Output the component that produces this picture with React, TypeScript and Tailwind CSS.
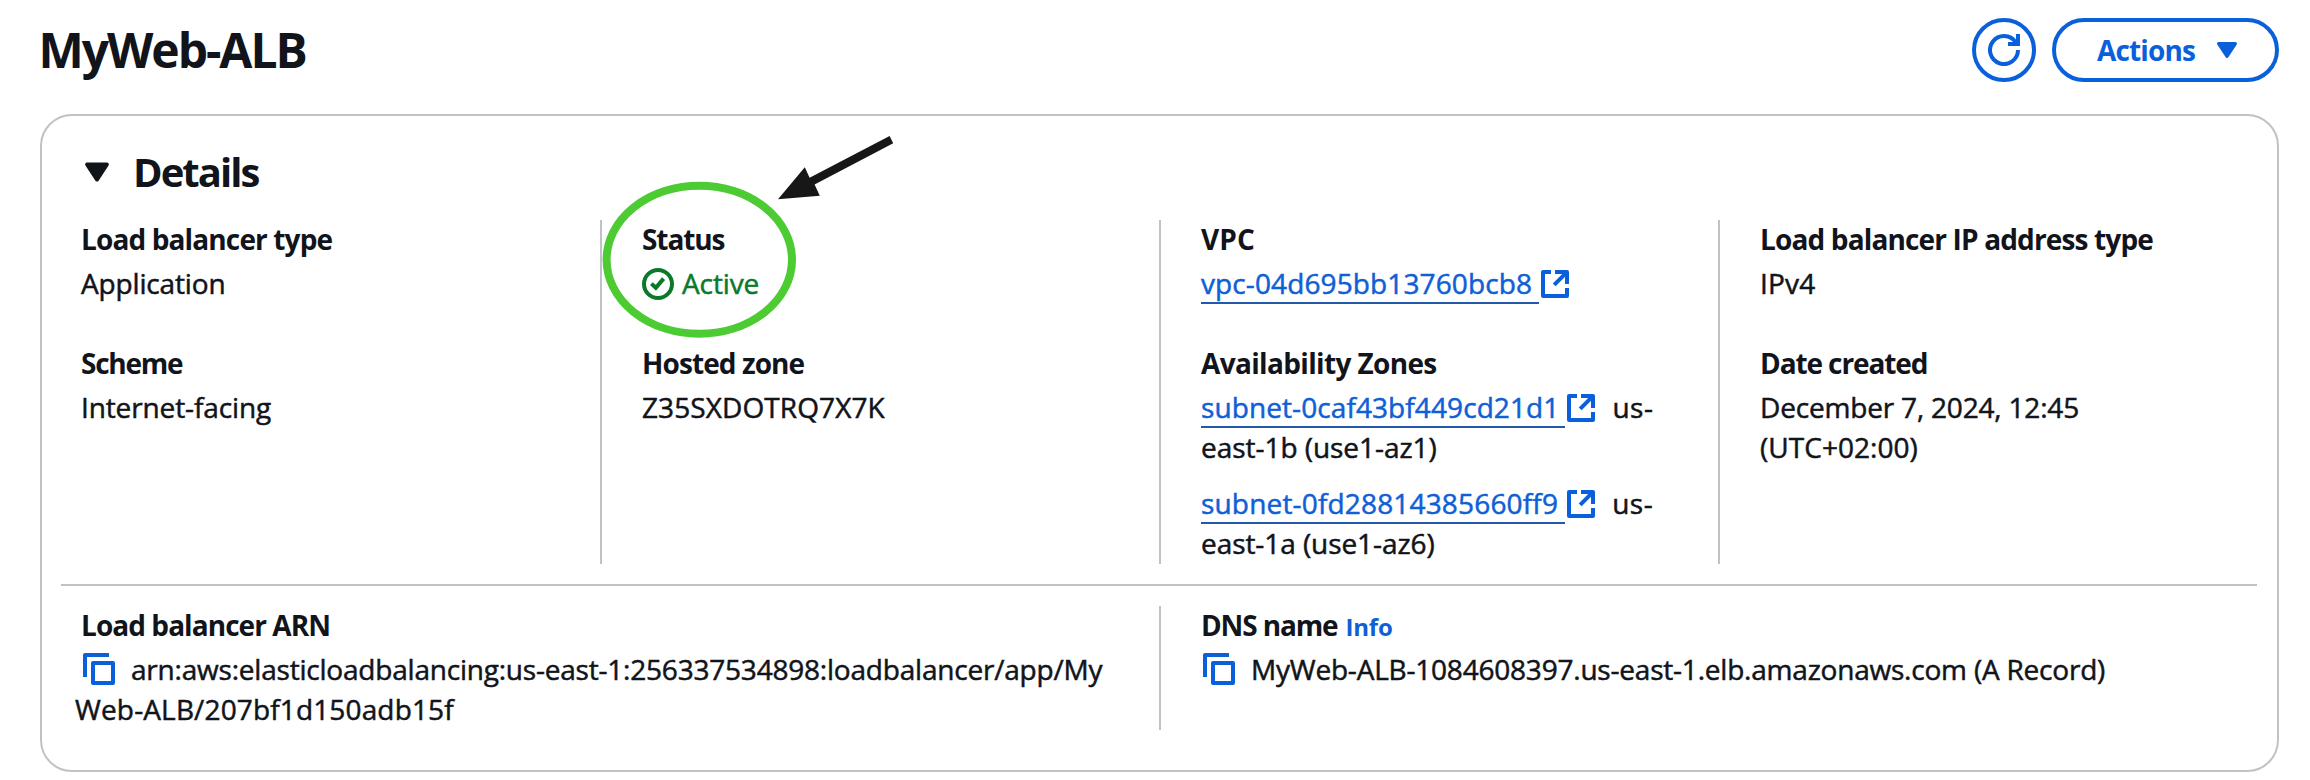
import type { ReactNode } from "react";

function CaretDown({ className }: { className: string }) {
  return (
    <svg viewBox="0 0 16 16" className={className} fill="currentColor" stroke="currentColor" strokeWidth="1.6" strokeLinejoin="round">
      <path d="M3.8 4.8h8.4L8 11.2z" />
    </svg>
  );
}

function RefreshIcon() {
  return (
    <svg viewBox="0 0 16 16" className="size-8" fill="none" stroke="currentColor" strokeWidth="2">
      <path d="M15 8a7 7 0 1 1-1.2-3.9" />
      <path d="M15 0v5h-5" />
    </svg>
  );
}

function SuccessIcon() {
  return (
    <svg viewBox="0 0 16 16" className="mt-[5px] size-8 shrink-0" fill="none" stroke="currentColor" strokeWidth="2">
      <circle cx="8" cy="8" r="7" />
      <path d="m4.7 7.8 2.2 2.1 3.9-4.6" />
    </svg>
  );
}

function ExternalIcon() {
  return (
    <svg viewBox="0 0 16 16" className="mt-[5px] size-8 shrink-0 text-[#0a5fdb]" fill="none" stroke="currentColor" strokeWidth="2" strokeLinejoin="round">
      <path d="M6 2H2v12h12v-4" />
      <path d="M8 2h6v6" />
      <path d="m7.6 8.4 6.2-6.2" />
    </svg>
  );
}

function CopyIcon({ className = "" }: { className?: string }) {
  return (
    <svg viewBox="0 0 16 16" className={`size-8 shrink-0 text-[#0a5fdb] ${className}`} fill="none" stroke="currentColor" strokeWidth="2" strokeLinejoin="round">
      <path d="M13 1H1v11" />
      <path d="M5 5h10v10H5z" />
    </svg>
  );
}

function Field({ label, children }: { label: ReactNode; children: ReactNode }) {
  return (
    <div className="flex flex-col gap-1">
      <div className="h-10 font-bold whitespace-nowrap">{label}</div>
      <div className="whitespace-nowrap [-webkit-text-stroke:0.5px_currentColor]">{children}</div>
    </div>
  );
}

function ExternalLink({ children }: { children: ReactNode }) {
  return (
    <a className="inline-flex h-10 items-start text-[#0f5fd6]">
      <span className="h-[41px] border-b-2 border-[#2458ab] pr-[7px]">{children}</span>
      <ExternalIcon />
    </a>
  );
}

function Column({ first = false, children }: { first?: boolean; children: ReactNode }) {
  return (
    <div className={first ? "pl-[39px]" : "border-l-2 border-[#c1c1c6] pl-10"}>
      <div className="-mt-px flex flex-col gap-10">{children}</div>
    </div>
  );
}

export default function App() {
  return (
    <div className="relative h-[780px] w-[2310px] overflow-hidden bg-white font-['Open_Sans','Noto_Sans',sans-serif] text-[28px] leading-10 text-[#11141a]">
      <header className="flex h-[114px] items-start justify-between pt-[18px] pr-[31px] pl-[38.5px]">
        <h1 className="text-[48px] leading-[64px] font-bold tracking-[-2.05px]">MyWeb-ALB</h1>
        <div className="flex gap-4 text-[#0a5fdb]">
          <button className="flex size-16 items-center justify-center rounded-full border-4 border-current">
            <RefreshIcon />
          </button>
          <button className="flex h-16 w-[227px] items-center rounded-full border-4 border-current pl-[41px] font-bold">
            <span className="tracking-[-0.84px]">Actions</span>
            <CaretDown className="ml-4 size-8" />
          </button>
        </div>
      </header>

      <section className="ml-10 h-[658px] w-[2239px] rounded-[32px] border-2 border-[#c1c1c6]">
        <div className="flex h-[104px] items-start pt-7 pl-9">
          <CaretDown className="mt-[9px] size-[38px]" />
          <h2 className="ml-[17px] text-[40px] leading-[56px] font-bold tracking-[-1.95px]">Details</h2>
        </div>

        <div className="grid h-[344px] grid-cols-[558px_559px_559px_1fr]">
          <Column first>
            <Field label={<span className="tracking-[-0.87px]">Load balancer type</span>}>
              <span className="tracking-[-0.15px]">Application</span>
            </Field>
            <Field label={<span className="tracking-[-1.25px]">Scheme</span>}>
              <span className="tracking-[-0.12px]">Internet-facing</span>
            </Field>
          </Column>
          <Column>
            <Field label={<span className="tracking-[-1.09px]">Status</span>}>
              <span className="flex h-10 items-start gap-2 text-[#0a7a2a]">
                <SuccessIcon />
                <span className="tracking-[-0.12px]">Active</span>
              </span>
            </Field>
            <Field label={<span className="tracking-[-0.92px]">Hosted zone</span>}>
              <span className="tracking-[0.09px]">Z35SXDOTRQ7X7K</span>
            </Field>
          </Column>
          <Column>
            <Field label={<span className="tracking-[0.11px]">VPC</span>}>
              <ExternalLink><span className="tracking-[0.11px]">vpc-04d695bb13760bcb8</span></ExternalLink>
            </Field>
            <Field label={<span className="tracking-[-0.65px]">Availability Zones</span>}>
              <div className="flex flex-col gap-4">
                <div>
                  <div className="flex h-10">
                    <ExternalLink><span className="-mr-px tracking-[0.09px]">subnet-0caf43bf449cd21d1</span></ExternalLink>
                    <span className="ml-[15px] tracking-[0.5px]">us-</span>
                  </div>
                  <div className="tracking-[-0.04px]">east-1b (use1-az1)</div>
                </div>
                <div>
                  <div className="flex h-10">
                    <ExternalLink><span className="tracking-[0.17px]">subnet-0fd28814385660ff9</span></ExternalLink>
                    <span className="ml-[15px] tracking-[0.5px]">us-</span>
                  </div>
                  <div className="tracking-[-0.07px]">east-1a (use1-az6)</div>
                </div>
              </div>
            </Field>
          </Column>
          <Column>
            <Field label={<span className="tracking-[-0.85px]">Load balancer IP address type</span>}>
              <span className="tracking-[0.2px]">IPv4</span>
            </Field>
            <Field label={<span className="tracking-[-1.1px]">Date created</span>}>
              <div className="tracking-[-0.18px]">December 7, 2024, 12:45</div>
              <div className="tracking-[0.04px]">(UTC+02:00)</div>
            </Field>
          </Column>
        </div>

        <div className="mr-5 ml-[19px] mt-5 h-0.5 bg-[#c1c1c6]" />

        <div className="mt-5 grid h-[124px] grid-cols-[1117px_1fr]">
          <Column first>
            <Field label={<span className="tracking-[-0.94px]">Load balancer ARN</span>}>
              <div className="-ml-1.5">
                <div className="flex h-10 items-center">
                  <CopyIcon className="ml-2" />
                  <span className="ml-4 tracking-[-0.21px]">arn:aws:elasticloadbalancing:us-east-1:256337534898:loadbalancer/app/My</span>
                </div>
                <div className="tracking-[0.14px]">Web-ALB/207bf1d150adb15f</div>
              </div>
            </Field>
          </Column>
          <Column>
            <Field
              label={
                <>
                  <span className="tracking-[-1.14px]">DNS name</span>
                  <span className="ml-2 text-[24px] tracking-[-0.17px] text-[#0f5fd6]">Info</span>
                </>
              }
            >
              <div className="flex h-10 items-center">
                <CopyIcon className="ml-0.5" />
                <span className="ml-4 tracking-[-0.21px]">MyWeb-ALB-1084608397.us-east-1.elb.amazonaws.com (A Record)</span>
              </div>
            </Field>
          </Column>
        </div>
      </section>

      <svg viewBox="0 0 310 220" className="pointer-events-none absolute top-[130px] left-[595px] h-[220px] w-[310px]">
        <ellipse cx="104.3" cy="129.7" rx="92.7" ry="74" fill="none" stroke="#4dcb33" strokeWidth="8" />
        <path d="M183 69.3 209.8 37.3 214.6 47.8 294.6 6 298.2 13.2 219.6 54.6 224.8 65.7z" fill="#171717" />
      </svg>
    </div>
  );
}
